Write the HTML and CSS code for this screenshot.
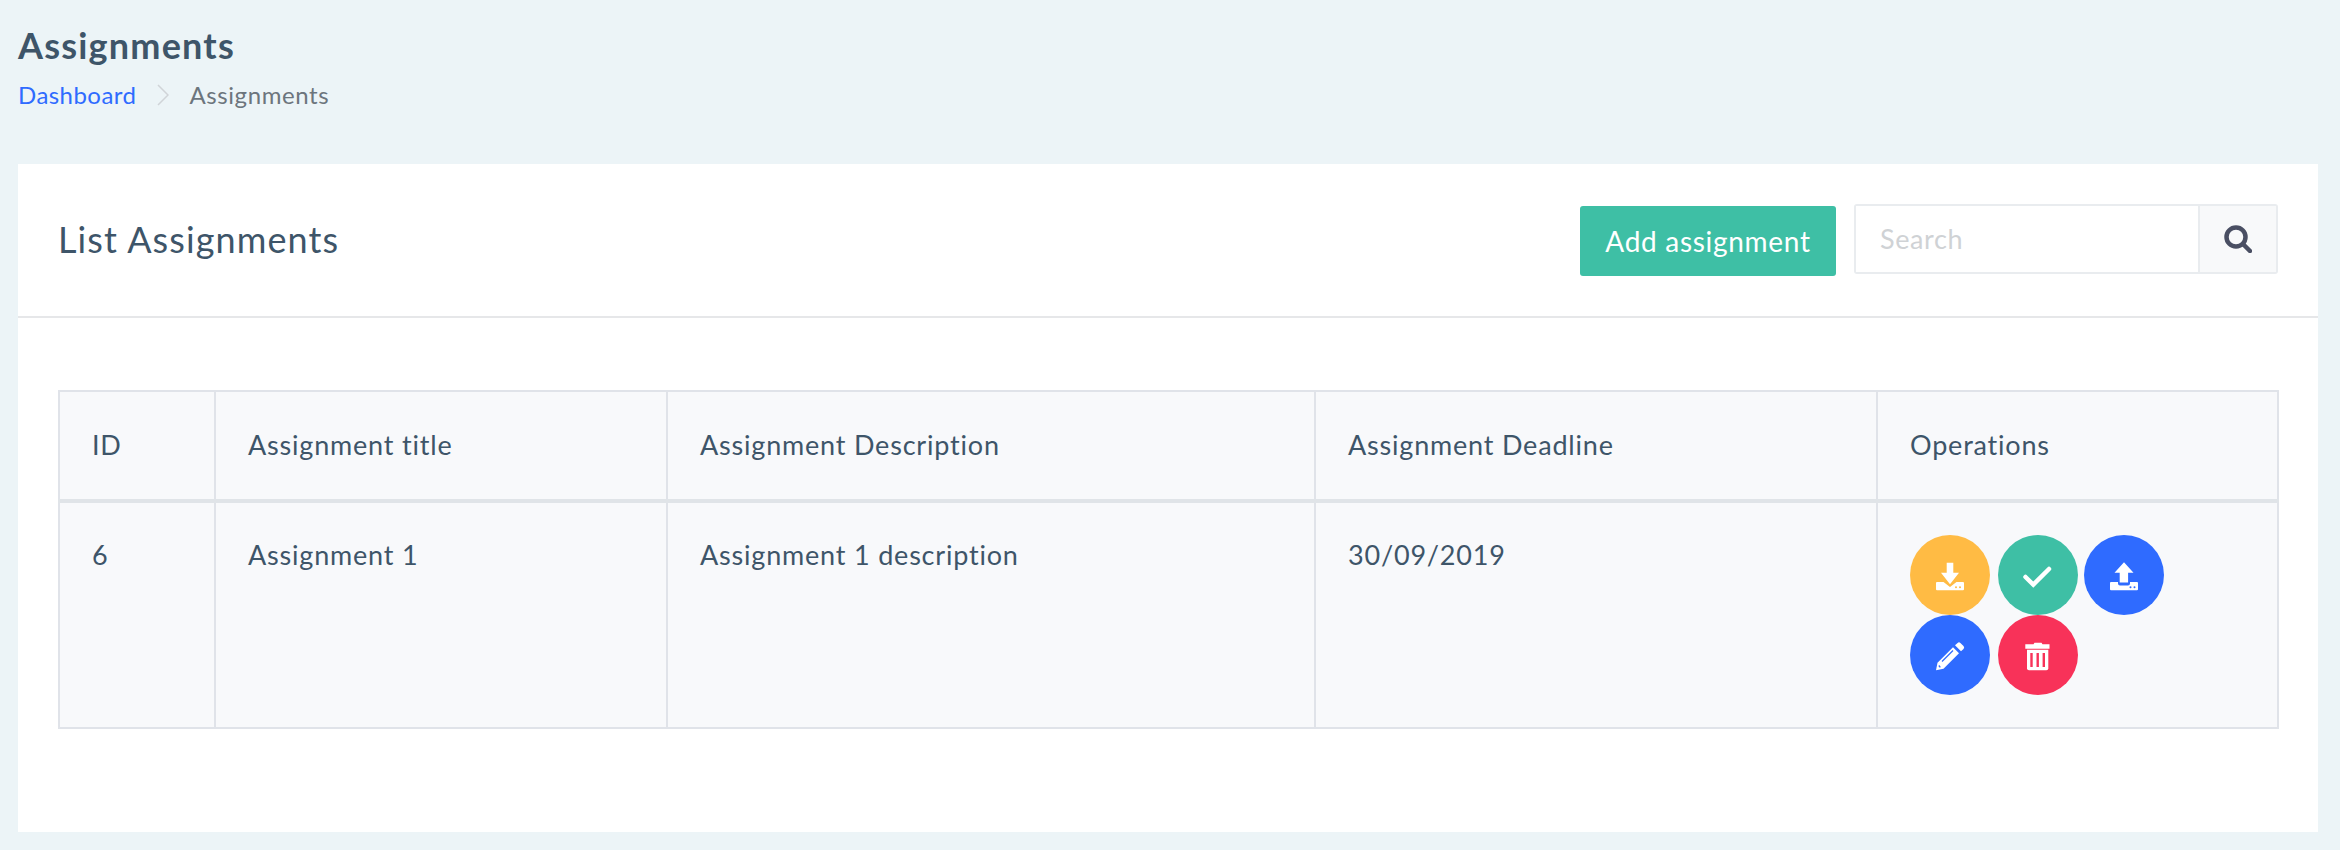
FILE: index.html
```html
<!DOCTYPE html>
<html lang="en">
<head>
<meta charset="utf-8">
<title>Assignments</title>
<link rel="stylesheet" href="styles.css">
</head>
<body>
<header class="page-head">
  <h1 class="page-title">Assignments</h1>
  <nav class="crumbs">
    <a class="crumb-link" href="#">Dashboard</a>
    <svg class="crumb-sep" viewBox="0 0 12 22"><path d="M1 1l10 10L1 21"/></svg>
    <span class="crumb-current">Assignments</span>
  </nav>
</header>
<main class="card">
  <div class="card-head">
    <h2 class="card-title">List Assignments</h2>
    <div class="tools">
      <button class="add-btn" type="button">Add assignment</button>
      <div class="search">
        <input class="search-input" type="text" placeholder="Search">
        <span class="search-btn">
          <svg class="search-icon" viewBox="0 0 28 28"><circle cx="12" cy="12" r="9.5"/><path d="M19 19l7 7"/></svg>
        </span>
      </div>
    </div>
  </div>
  <div class="card-body">
    <table class="grid">
      <thead>
        <tr>
          <th class="c-id">ID</th>
          <th class="c-title">Assignment title</th>
          <th class="c-desc">Assignment Description</th>
          <th class="c-date">Assignment Deadline</th>
          <th class="c-ops">Operations</th>
        </tr>
      </thead>
      <tbody>
        <tr>
          <td>6</td>
          <td>Assignment 1</td>
          <td>Assignment 1 description</td>
          <td>30/09/2019</td>
          <td class="ops">
            <a class="round yellow" href="#"><svg viewBox="0 0 32 32"><path class="w" d="M12.7 3.7h6.6v10H25L16 25.3 7 13.7h5.7z"/><path class="w" d="M3 23h6.5l6.5 5 6.5-5H29a1 1 0 0 1 1 1v6.3a1 1 0 0 1-1 1H3a1 1 0 0 1-1-1V24a1 1 0 0 1 1-1z"/><circle class="dot-y" cx="22" cy="28.3" r="1"/><circle class="dot-y" cx="26" cy="28.3" r="1"/></svg></a>
            <a class="round green" href="#"><svg viewBox="0 0 32 32"><path class="chk" d="M3.5 18l7.8 7.6L27 10"/></svg></a>
            <a class="round blue" href="#"><svg viewBox="0 0 32 32"><path class="w" d="M16 3.3l9.5 10.4h-5.4v9.8h-8.4v-9.8H6.500z"/><path class="w" d="M3 23h7v1.500a2 2 0 0 0 2 2h8a2 2 0 0 0 2-2V23h7a1 1 0 0 1 1 1v6.300a1 1 0 0 1-1 1H3a1 1 0 0 1-1-1V24a1 1 0 0 1 1-1z"/><circle class="dot-b" cx="22.500" cy="28.300" r="1"/><circle class="dot-b" cx="26.500" cy="28.300" r="1"/></svg></a>
            <a class="round blue" href="#"><svg viewBox="0 0 32 32"><path class="w" d="M2 31.300l1.500-7.500L19 8.300l6 6L9.500 29.800z"/><path class="w" d="M21 6.300l2.600-2.300a2 2 0 0 1 2.800 0l3.100 3.100a2 2 0 0 1 0 2.800L27 12.300z"/><path class="pen" d="M8 22.500l11-11"/><path class="pen" d="M4.800 26.500l1.500 1.800"/></svg></a>
            <a class="round red" href="#"><svg viewBox="0 0 32 32"><path class="w" d="M11.500 5.300l1-1.600h7l1 1.600h7v4.400H3.300V5.300z"/><path class="w" d="M5 10.700h21.300v18.600a2 2 0 0 1-2 2H7a2 2 0 0 1-2-2z"/><path class="slot" d="M9.500 14v14M15.700 14v14M21.800 14v14"/></svg></a>
          </td>
        </tr>
      </tbody>
    </table>
  </div>
</main>
</body>
</html>
```
FILE: styles.css
```css
* { box-sizing: border-box; }
html, body { height: 100%; }
body {
  margin: 0;
  padding: 0 22px 18px 18px;
  background: #ecf4f7;
  font-family: "Lato", "Noto Sans", sans-serif;
  color: #3e5569;
  overflow: hidden;
}
.page-head { height: 164px; padding-top: 23px; }
.page-title { margin: 0; font-size: 36px; line-height: 44px; font-weight: 700; letter-spacing: 1.2px; }
.crumbs { display: flex; align-items: center; margin-top: 6px; font-size: 24px; line-height: 44px; height: 44px; letter-spacing: 0.6px; }
.crumb-link { color: #2f6bff; text-decoration: none; letter-spacing: 0.45px; }
.crumb-sep { width: 12px; height: 22px; margin: 0 20px 0 21px; fill: none; stroke: #d0d4d8; stroke-width: 1.5; }
.crumb-current { color: #6c757d; }
.card { background: #fff; height: 668px; }
.card-head { height: 154px; border-bottom: 2px solid #e6e7e9; display: flex; align-items: center; justify-content: space-between; padding: 0 40px; }
.card-title { margin: 0 0 2px; font-size: 36px; font-weight: 400; line-height: 44px; letter-spacing: 1.1px; }
.tools { display: flex; align-items: flex-start; }
.add-btn { width: 256px; height: 70px; margin-top: 2px; border: 0; border-radius: 3px; background: #3ebfa5; color: #fff; font: 400 28px "Lato", sans-serif; letter-spacing: 0.7px; }
.search { display: flex; width: 424px; height: 70px; margin-left: 18px; border: 2px solid #e9ecef; border-radius: 3px; }
.search-input { flex: 1; min-width: 0; border: 0; outline: 0; padding: 0 24px 2px; font: 400 27px "Lato", sans-serif; letter-spacing: 0.6px; background: #fff; }
.search-input::placeholder { color: #cfd2d5; }
.search-btn { width: 78px; display: flex; align-items: center; justify-content: center; background: #f8f9fa; border-left: 2px solid #e9ecef; }
.search-icon { width: 28px; height: 28px; fill: none; stroke: #4a4f63; stroke-width: 4.500; stroke-linecap: round; }
.card-body { padding: 72px 40px 0; }
.grid { width: 2219px; table-layout: fixed; border-collapse: collapse; background: #f8f9fb; font-size: 27px; letter-spacing: 0.8px; }
.grid th, .grid td { border: 2px solid #e0e3e9; padding: 32px; text-align: left; vertical-align: top; font-weight: 400; line-height: 42px; }
.grid td { padding-top: 31px; }
.grid thead th { border-bottom-width: 4px; border-bottom-color: #e0e4e8; padding-bottom: 33px; }
.c-id { width: 156px; }
.c-title { width: 452px; }
.c-desc { width: 648px; }
.c-date { width: 562px; }
.c-ops { width: 401px; }
.grid td.ops { padding: 32px 80px 32px 32px; line-height: 0; font-size: 0; }
.round { display: inline-flex; align-items: center; justify-content: center; width: 80px; height: 80px; border-radius: 50%; vertical-align: top; }
.round svg { width: 32px; height: 32px; }
.round:nth-child(1) { margin-right: 7px; }
.round:nth-child(2) { margin-right: 5px; }
.round:nth-child(4) { margin-right: 7px; }
.yellow { background: #ffbb44; }
.green { background: #3ebfa5; }
.blue { background: #2f6bff; }
.red { background: #f83259; }
.w { fill: #fff; }
.dot-y { fill: #ffbb44; }
.dot-b { fill: #2f6bff; }
.chk { fill: none; stroke: #fff; stroke-width: 4.500; stroke-linecap: round; stroke-linejoin: miter; }
.pen { fill: none; stroke: #2f6bff; stroke-width: 1.300; }
.slot { fill: none; stroke: #f83259; stroke-width: 2.400; }
```
